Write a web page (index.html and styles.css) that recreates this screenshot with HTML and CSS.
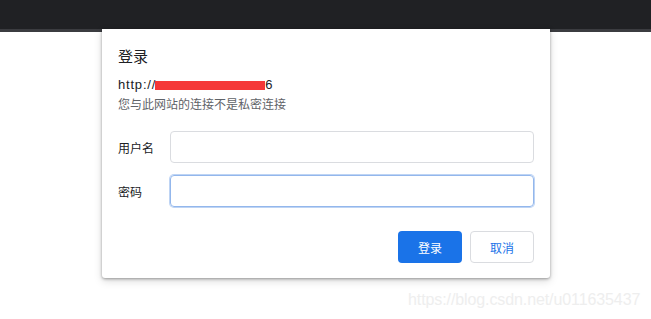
FILE: index.html
```html
<!DOCTYPE html>
<html>
    <head>
        <meta charset="utf-8">
        <link rel="stylesheet" href="styles.css">
    </head>
    <body>
        <div class="topbar"></div>
        <div class="topstrip"></div>

        <div class="dialog">
            <div class="dialog-title">登录</div>
            <div class="dialog-url">http://<span class="redact"></span>6</div>
            <div class="dialog-note">您与此网站的连接不是私密连接</div>

            <div class="form">
                <div class="row">
                    <span class="label">用户名</span>
                    <span class="input"></span>
                </div>
                <div class="row">
                    <span class="label">密码</span>
                    <span class="input input-focus"></span>
                </div>
            </div>

            <div class="buttons">
                <span class="btn btn-primary">登录</span>
                <span class="btn btn-plain">取消</span>
            </div>
        </div>

        <div class="watermark">https://blog.csdn.net/u011635437</div>
    </body>
</html>
```

FILE: styles.css
```css
* {
    box-sizing: border-box;
}

body {
    margin: 0;
    background: #fff;
    font-family: 'Liberation Sans', 'Noto Sans CJK SC', sans-serif;
    color: #202124;
}

.topbar {
    height: 29px;
    background: #202124;
}

.topstrip {
    height: 3px;
    background: #3b3c40;
}

.dialog {
    position: absolute;
    left: 102px;
    top: 29px;
    width: 448px;
    height: 249px;
    padding: 18px 16px 15px 16px;
    background: #fff;
    border-radius: 0 0 3px 3px;
    box-shadow: 0 1px 3px rgba(0, 0, 0, 0.35), 0 3px 8px rgba(0, 0, 0, 0.15);
}

.dialog-title {
    font-size: 15px;
    line-height: 20px;
    color: #202124;
}

.dialog-url {
    margin-top: 9px;
    font-size: 13px;
    line-height: 18px;
    letter-spacing: 0.8px;
    color: #202124;
    display: flex;
    align-items: center;
}

.redact {
    display: inline-block;
    margin-left: -1px;
    width: 110px;
    height: 9px;
    background: #f53838;
}

.dialog-note {
    margin-top: 2px;
    font-size: 12px;
    line-height: 18px;
    color: #5f6368;
}

.form {
    margin-top: 17px;
    display: flex;
    flex-direction: column;
    gap: 12px;
}

.row {
    display: flex;
    align-items: center;
}

.label {
    width: 52px;
    font-size: 12px;
    color: #202124;
}

.input {
    width: 364px;
    height: 32px;
    border: 1px solid #dadce0;
    border-radius: 4px;
}

.input-focus {
    border-color: #93b7ec;
    box-shadow: 0 0 0 1px rgba(147, 183, 236, 0.6);
}

.buttons {
    margin-top: 24px;
    display: flex;
    justify-content: flex-end;
    gap: 8px;
}

.btn {
    width: 64px;
    height: 32px;
    border-radius: 4px;
    font-size: 12px;
    display: flex;
    align-items: center;
    justify-content: center;
}

.btn-primary {
    background: #1a73e8;
    color: #fff;
}

.btn-plain {
    border: 1px solid #dadce0;
    color: #1a73e8;
}

.watermark {
    position: absolute;
    left: 408px;
    top: 291px;
    font-size: 16px;
    line-height: 18px;
    letter-spacing: -0.1px;
    color: #eeeeee;
}
```
